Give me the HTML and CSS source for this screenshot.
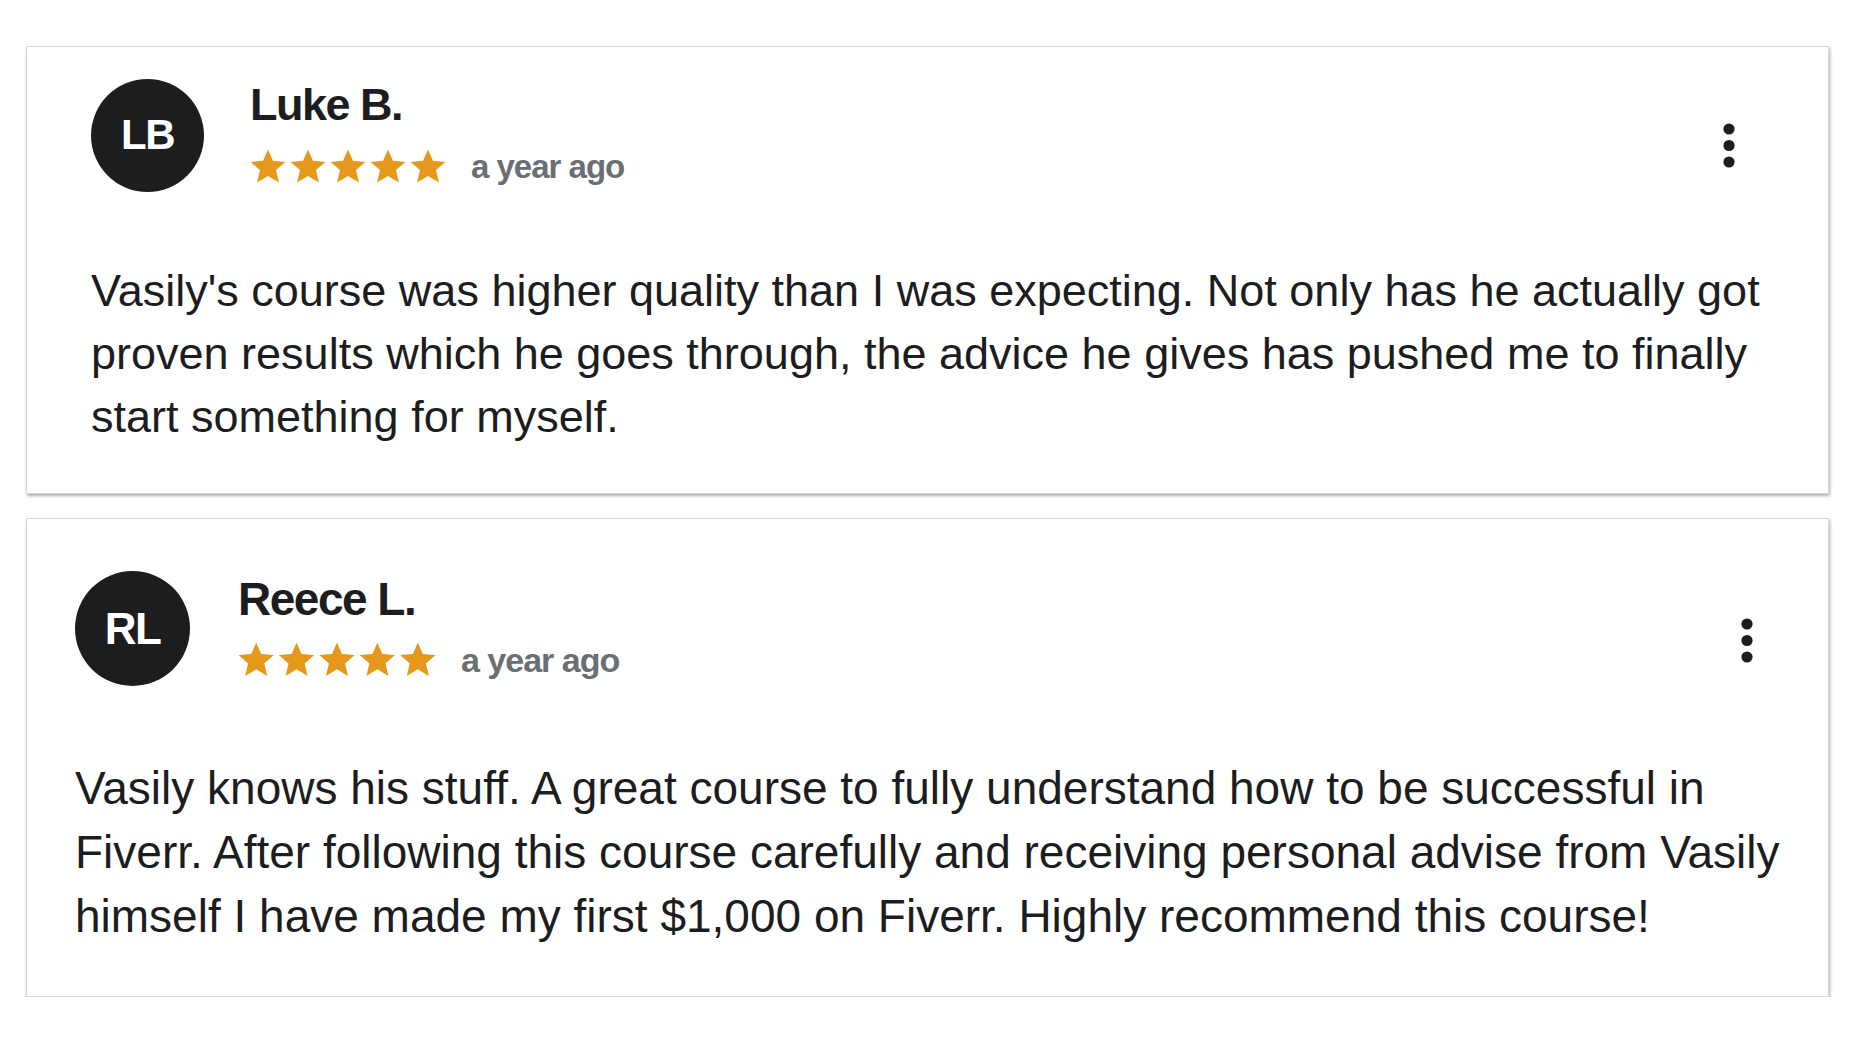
FILE: index.html
```html
<!DOCTYPE html>
<html lang="en">
<head>
<meta charset="utf-8">
<title>Reviews</title>
<link rel="stylesheet" href="styles.css">
</head>
<body>
<main class="reviews">
  <article class="card card--a">
    <header class="card__head">
      <div class="avatar">LB</div>
      <div class="meta">
        <div class="name">Luke B.</div>
        <div class="rating">
          <svg class="stars" viewBox="0 0 196 36" aria-hidden="true">
            <defs><polygon id="st" points="18,0.5 22.9,11.8 35.5,12.9 26,21.1 28.9,33.5 18,27 7.1,33.5 10,21.1 0.5,12.9 13.1,11.8"/></defs>
            <use href="#st" x="0"/><use href="#st" x="40"/><use href="#st" x="80"/><use href="#st" x="120"/><use href="#st" x="160"/>
          </svg>
          <span class="time">a year ago</span>
        </div>
      </div>
      <button class="more" aria-label="More options">
        <svg viewBox="0 0 12 46"><circle cx="6" cy="6" r="5.6"/><circle cx="6" cy="22.5" r="5.6"/><circle cx="6" cy="39" r="5.6"/></svg>
      </button>
    </header>
    <p class="text">Vasily's course was higher quality than I was expecting. Not only has he actually got proven results which he goes through, the advice he gives has pushed me to finally start something for myself.</p>
  </article>

  <article class="card card--b">
    <header class="card__head">
      <div class="avatar">RL</div>
      <div class="meta">
        <div class="name">Reece L.</div>
        <div class="rating">
          <svg class="stars" viewBox="0 0 196 36" aria-hidden="true">
            <use href="#st" x="0"/><use href="#st" x="40"/><use href="#st" x="80"/><use href="#st" x="120"/><use href="#st" x="160"/>
          </svg>
          <span class="time">a year ago</span>
        </div>
      </div>
      <button class="more" aria-label="More options">
        <svg viewBox="0 0 12 46"><circle cx="6" cy="6" r="5.6"/><circle cx="6" cy="22.5" r="5.6"/><circle cx="6" cy="39" r="5.6"/></svg>
      </button>
    </header>
    <p class="text">Vasily knows his stuff. A great course to fully understand how to be successful in Fiverr. After following this course carefully and receiving personal advise from Vasily himself I have made my first $1,000 on Fiverr. Highly recommend this course!</p>
  </article>
</main>
</body>
</html>
```

FILE: styles.css
```css
* { box-sizing: border-box; }

html, body {
  margin: 0;
  background: #ffffff;
}

body {
  font-family: "Liberation Sans", Arial, Helvetica, sans-serif;
  color: #1c1d1f;
}

.reviews {
  display: flex;
  flex-direction: column;
  gap: 24px;
  padding: 46px 27px 0 26px;
}

.card {
  background: #fff;
  border: 1px solid #d6d9db;
  box-shadow: 1px 2px 3px rgba(0, 0, 0, 0.32);
}

.card__head {
  display: flex;
  align-items: center;
}

.avatar {
  flex: none;
  width: 113px;
  height: 113px;
  border-radius: 50%;
  background: #1c1d1f;
  color: #fff;
  font-weight: 700;
  font-size: 42px;
  letter-spacing: -1.5px;
  display: flex;
  align-items: center;
  justify-content: center;
}

.meta {
  display: flex;
  flex-direction: column;
  gap: 10px;
  margin: 1px 0 -1px 46px;
}

.name {
  font-size: 45px;
  font-weight: 700;
  line-height: 52px;
  letter-spacing: -1.5px;
}

.rating {
  display: flex;
  align-items: center;
  height: 52px;
}

.stars {
  width: 196px;
  height: 36px;
  fill: #e59819;
}

.time {
  margin-left: 25px;
  font-size: 33px;
  font-weight: 700;
  letter-spacing: -1px;
  color: #6a6f73;
}

.more {
  margin: 22px 45px 0 auto;
  padding: 0;
  border: 0;
  background: none;
  width: 12px;
  height: 46px;
  fill: #1c1d1f;
}

.more svg {
  display: block;
  width: 12px;
  height: 46px;
}

.text {
  margin: 0;
  font-size: 45px;
  line-height: 63px;
}

/* first card */
.card--a {
  padding: 31px 48px 45px 64px;
}
.card--a .card__head { margin-bottom: 67px; }

/* second card, rendered slightly larger */
.card--b {
  padding: 52px 30px 48px 48px;
}
.card--b .card__head { margin-bottom: 70px; }
.card--b .avatar {
  width: 115px;
  height: 115px;
  font-size: 44px;
}
.card--b .meta { margin: 1px 0 -1px 48px; }
.card--b .more { margin-top: 24px; }
.card--b .name { font-size: 46px; }
.card--b .time { font-size: 34px; }
.card--b .stars { width: 198px; height: 36.5px; }
.card--b .text {
  font-size: 46px;
  line-height: 64px;
}
```
